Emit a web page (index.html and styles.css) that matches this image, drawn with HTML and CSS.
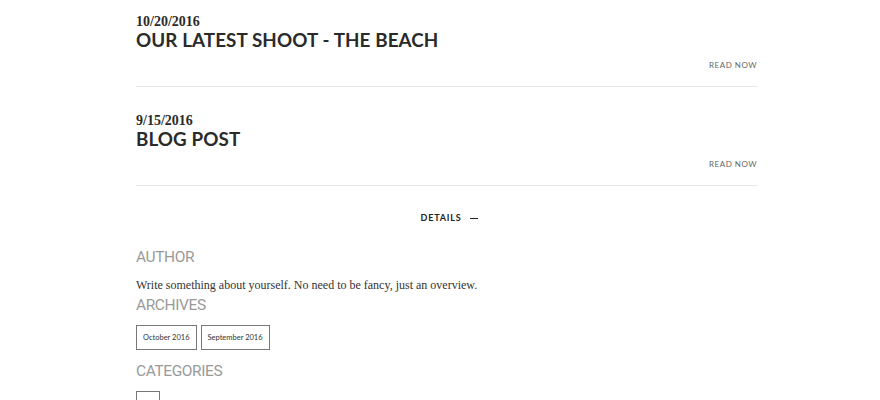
FILE: index.html
```html
<!DOCTYPE html>
<html lang="en">
<head>
    <meta charset="UTF-8">
    <meta name="viewport" content="width=device-width, initial-scale=1.0">
    <title>Blog</title>
    <link rel="stylesheet" href="styles.css">
</head>
<body>
    <div class="container">
        <!-- Posts -->
        <div class="post">
            <div class="post-date">10/20/2016</div>
            <h2 class="post-title">Our Latest Shoot - The Beach</h2>
            <a href="#" class="read-more">Read Now</a>
        </div>

        <div class="post">
            <div class="post-date">9/15/2016</div>
            <h2 class="post-title">Blog Post</h2>
            <a href="#" class="read-more">Read Now</a>
        </div>

        <!-- Sidebar details -->
        <div class="details-toggle">Details <span class="dash"></span></div>

        <div class="widget">
            <h3 class="widget-title">Author</h3>
            <p class="widget-text">Write something about yourself. No need to be fancy, just an overview.</p>
        </div>

        <div class="widget">
            <h3 class="widget-title">Archives</h3>
            <div class="tags">
                <a href="#" class="tag">October 2016</a>
                <a href="#" class="tag">September 2016</a>
            </div>
        </div>

        <div class="widget">
            <h3 class="widget-title">Categories</h3>
            <div class="tags">
                <a href="#" class="tag tag-empty"></a>
            </div>
        </div>
    </div>
</body>
</html>
```

FILE: styles.css
```css
body {
    margin: 0;
    background: #fff;
    color: #2b2b2b;
    font-family: 'Liberation Serif', serif;
}
.container {
    width: 621px;
    margin-left: 136px;
}
.post {
    padding-top: 14px;
    height: 72px;
    border-bottom: 1px solid #e6e6e6;
}
.post + .post {
    padding-top: 26px;
}
.post-date {
    font-family: 'Liberation Serif', serif;
    font-weight: 700;
    font-size: 14px;
    line-height: 16px;
    color: #2a2a2a;
}
.post-title {
    margin: -4px 0 0;
    font-family: 'Lato', sans-serif;
    font-weight: 700;
    font-size: 18.8px;
    line-height: 28px;
    letter-spacing: 0.1px;
    text-transform: uppercase;
    color: #2a2a2a;
}
.read-more {
    display: block;
    text-align: right;
    margin-top: 6px;
    font-family: 'Lato', sans-serif;
    font-size: 8px;
    letter-spacing: 0.5px;
    text-transform: uppercase;
    color: #666;
    text-decoration: none;
}
.details-toggle {
    text-align: center;
    margin-top: 26px;
    padding-left: 6px;
    font-family: 'Lato', sans-serif;
    font-weight: 700;
    font-size: 9px;
    letter-spacing: 0.8px;
    text-transform: uppercase;
    color: #222;
}
.dash {
    display: inline-block;
    width: 8px;
    height: 1px;
    background: #222;
    vertical-align: middle;
    margin-left: 6px;
}
.widget-title {
    margin: 0;
    font-family: 'Roboto', sans-serif;
    font-weight: 400;
    font-size: 15.5px;
    line-height: 22px;
    letter-spacing: -0.4px;
    text-transform: uppercase;
    color: #9a9a9a;
}
.details-toggle + .widget {
    margin-top: 23px;
}
.widget-text {
    margin: 8px 0 0;
    font-size: 12px;
    line-height: 18px;
    color: #333;
}
.tags {
    display: flex;
    gap: 4px;
    margin-top: 9px;
}
.tag {
    display: inline-block;
    padding: 7px 6px;
    border: 1px solid #777;
    font-family: 'Lato', sans-serif;
    font-size: 7.5px;
    line-height: 9px;
    color: #333;
    text-decoration: none;
}
.tag-empty {
    width: 10px;
    height: 9px;
}
.widget:last-child {
    margin-top: 10px;
}
```
